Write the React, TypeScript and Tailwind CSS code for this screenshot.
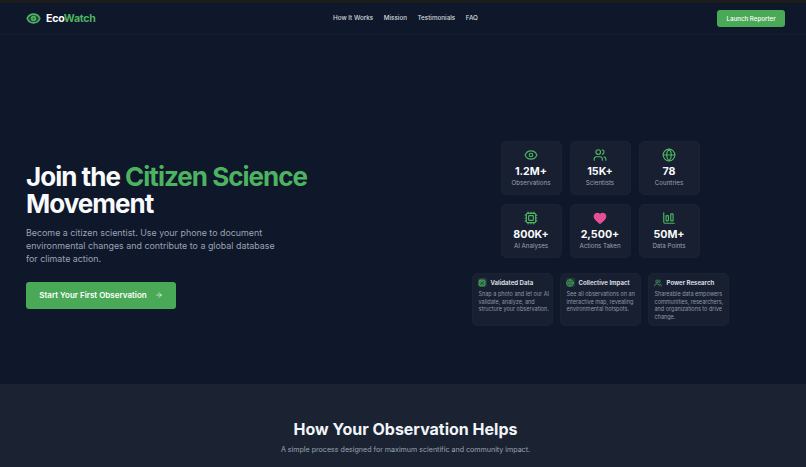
import { ArrowRight, ChartColumnBig, Cpu, Eye, Globe, Heart, Users } from 'lucide-react';

const stats = [
  { icon: Eye, value: '1.2M+', label: 'Observations', color: 'text-[#4cb460]' },
  { icon: Users, value: '15K+', label: 'Scientists', color: 'text-[#4cb460]' },
  { icon: Globe, value: '78', label: 'Countries', color: 'text-[#4cb460]' },
  { icon: Cpu, value: '800K+', label: 'AI Analyses', color: 'text-[#4cb460]' },
  { icon: Heart, value: '2,500+', label: 'Actions Taken', color: 'text-[#e64f98]', fill: true },
  { icon: ChartColumnBig, value: '50M+', label: 'Data Points', color: 'text-[#4cb460]' },
];

const features = [
  {
    icon: Cpu,
    title: 'Validated Data',
    text: 'Snap a photo and let our AI validate, analyze, and structure your observation.',
    tile: 'bg-[#4cb460]/20',
  },
  {
    icon: Globe,
    title: 'Collective Impact',
    text: 'See all observations on an interactive map, revealing environmental hotspots.',
    tile: 'bg-[#4cb460]/20',
  },
  {
    icon: Users,
    title: 'Power Research',
    text: 'Shareable data empowers communities, researchers, and organizations to drive change.',
    tile: '',
  },
];

const navLinks = ['How It Works', 'Mission', 'Testimonials', 'FAQ'];

const App = () => {
  return (
    <div className="h-[467px] w-[806px] overflow-hidden bg-[#0f172a] font-['Inter',sans-serif] text-white">
      <div className="h-[3px] bg-[#1c1c1c]" />

      <header className="flex h-[32px] items-center justify-between border-b border-[#141c2e] pl-[26px] pr-[21px]">
        <div className="flex w-[200px] items-center gap-[5px]">
          <Eye className="h-[15px] w-[15px] fill-[#4cb460]/30 text-[#4cb460]" strokeWidth={2.6} />
          <span className="text-[10.6px] font-bold tracking-tight">
            Eco<span className="text-[#4cb460]">Watch</span>
          </span>
        </div>
        <nav className="flex items-center gap-[10.5px] pt-[1px] text-[6.3px] font-medium text-[#d5d8de]">
          {navLinks.map((link) => (
            <a key={link}>{link}</a>
          ))}
        </nav>
        <div className="flex w-[200px] justify-end">
          <button className="h-[17px] w-[68px] rounded-[3px] bg-[#4aa957] text-[6.2px] font-medium">
            Launch Reporter
          </button>
        </div>
      </header>

      <section className="grid h-[349px] grid-cols-2 items-center gap-[34px] px-[26px] pb-[58px] pt-[106px]">
        <div className="pt-[5px]">
          <h1 className="text-[26px] font-bold leading-[27px] tracking-[-0.038em] text-[#f8fafc]">
            Join the <span className="text-[#4cb460]">Citizen Science</span>
            <br />
            Movement
          </h1>
          <p className="mt-[10px] w-[258px] text-[8.9px] leading-[12.7px] text-[#9aa3b2]">
            Become a citizen scientist. Use your phone to document environmental changes and contribute to a global
            database for climate action.
          </p>
          <button className="mt-[16px] flex h-[27px] w-[150px] items-center justify-center gap-[8px] rounded-[3px] bg-[#4aa957] text-[8px] font-semibold">
            Start Your First Observation
            <ArrowRight className="h-[8px] w-[8px]" />
          </button>
        </div>

        <div className="flex flex-col items-center gap-[15px]">
          <div className="grid grid-cols-[61px_61px_61px] gap-x-[8px] gap-y-[9px]">
            {stats.map(({ icon: Icon, value, label, color, fill }) => (
              <div
                key={label}
                className="flex h-[54px] flex-col items-center rounded-[5px] border border-[#1a2334] bg-[#171f30] pt-[6px]"
              >
                <Icon className={`h-[14px] w-[14px] ${color}`} fill={fill ? 'currentColor' : 'none'} />
                <div className="mt-[3px] text-[10.7px] font-bold leading-[14px] text-[#f8fafc]">{value}</div>
                <div className="text-[6.2px] leading-[8px] text-[#9aa3b2]">{label}</div>
              </div>
            ))}
          </div>

          <div className="grid grid-cols-[81px_81px_81px] gap-[7px]">
            {features.map(({ icon: Icon, title, text, tile }) => (
              <div
                key={title}
                className="h-[53px] rounded-[5px] border border-[#1a2334] bg-[#171f30] pl-[5px] pr-[1px] pt-[4px]"
              >
                <div className="flex items-center gap-[4px]">
                  <span className={`flex h-[9px] w-[9px] items-center justify-center rounded-[2px] ${tile}`}>
                    <Icon className="h-[8px] w-[8px] text-[#4cb460]" />
                  </span>
                  <span className="text-[6.1px] font-semibold leading-[9px] text-[#e2e8f0]">{title}</span>
                </div>
                <p className="mt-[4px] pl-[1px] text-[5.5px] leading-[7.5px] text-[#8f98a8]">{text}</p>
              </div>
            ))}
          </div>
        </div>
      </section>

      <section className="h-[83px] bg-[#1b2333] pl-[5px] pt-[35px] text-center">
        <h2 className="text-[16px] font-bold leading-[21px] text-[#f1f5f9]">How Your Observation Helps</h2>
        <p className="mt-[5px] text-[7.1px] leading-[10px] text-[#9aa3b2]">
          A simple process designed for maximum scientific and community impact.
        </p>
      </section>
    </div>
  );
};

export default App;
